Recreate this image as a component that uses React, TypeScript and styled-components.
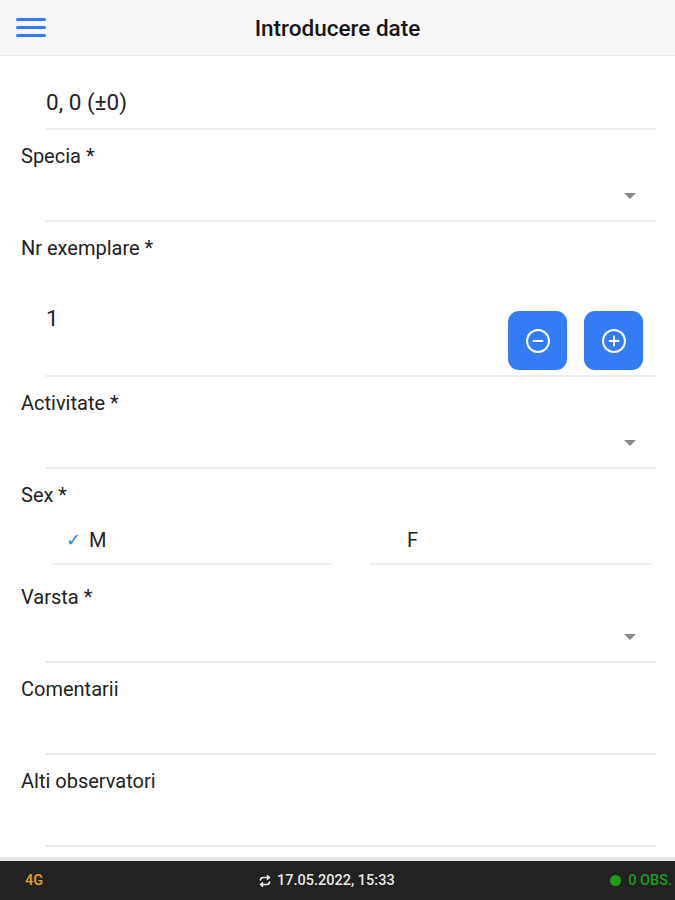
import React, { useState } from "react";
import styled, { createGlobalStyle } from "styled-components";

const GlobalStyle = createGlobalStyle`
  html, body {
    margin: 0;
    padding: 0;
    background: #ffffff;
  }
  body {
    font-family: Roboto, "Liberation Sans", Arial, sans-serif;
    color: #1c1c1c;
  }
  * {
    box-sizing: border-box;
  }
`;

const Screen = styled.div`
  width: 675px;
  height: 900px;
  display: flex;
  flex-direction: column;
  background: #ffffff;
  overflow: hidden;
`;

const Header = styled.div`
  height: 56px;
  flex-shrink: 0;
  background: #f7f7f7;
  border-bottom: 1px solid #e9e9e9;
  display: flex;
  align-items: center;
  position: relative;
`;

const MenuButton = styled.div`
  width: 30px;
  margin-left: 16px;
  display: flex;
  flex-direction: column;
  gap: 5px;
  span {
    display: block;
    height: 3px;
    border-radius: 2px;
    background: #2f7cf6;
  }
`;

const Title = styled.div`
  position: absolute;
  left: 0;
  right: 0;
  text-align: center;
  font-size: 22.5px;
  font-weight: 500;
  color: #151515;
  pointer-events: none;
`;

const Form = styled.div`
  flex: 1;
  padding-top: 19px;
`;

const Field = styled.div<{ $extra?: number }>`
  padding-top: 15px;
  margin-bottom: ${(p) => p.$extra || 0}px;
`;

const Label = styled.div`
  margin-left: 21px;
  font-size: 20px;
  line-height: 22px;
  color: #222;
`;

const InputRow = styled.div<{ $height?: number }>`
  margin-left: 46px;
  margin-right: 19px;
  height: ${(p) => p.$height || 55}px;
  border-bottom: 2px solid #ececec;
  display: flex;
  align-items: center;
  justify-content: space-between;
`;

const Value = styled.div`
  font-size: 22.5px;
  color: #222;
`;

const CountValue = styled(Value)`
  align-self: flex-start;
  margin-top: 46px;
`;

const Arrow = styled.div`
  width: 0;
  height: 0;
  margin-right: 20px;
  margin-top: 4px;
  border-left: 6px solid transparent;
  border-right: 6px solid transparent;
  border-top: 6px solid #8a8a8a;
`;

const Stepper = styled.div`
  align-self: flex-end;
  margin-bottom: 5px;
  margin-right: 13px;
  display: flex;
  gap: 17px;
`;

const StepButton = styled.button`
  width: 59px;
  height: 59px;
  border: none;
  border-radius: 11px;
  background: #347bf6;
  display: flex;
  align-items: center;
  justify-content: center;
  padding: 0;
  cursor: pointer;
`;

const Options = styled.div`
  display: flex;
  gap: 37px;
  padding-left: 52px;
  padding-right: 24px;
`;

const Option = styled.div`
  flex: 1;
  height: 59px;
  padding-top: 10px;
  border-bottom: 2px solid #f0f0f0;
  display: flex;
  align-items: center;
  padding-left: 14px;
  gap: 8px;
  font-size: 20px;
  color: #222;
  cursor: pointer;
`;

const Check = styled.span<{ $on: boolean }>`
  width: 15px;
  color: #2f7cf6;
  font-size: 18px;
  visibility: ${(p) => (p.$on ? "visible" : "hidden")};
`;

const StatusBar = styled.div`
  height: 43px;
  flex-shrink: 0;
  background: #222222;
  border-top: 4px solid #e6e6e6;
  display: flex;
  align-items: center;
  padding: 0 3px 0 25px;
  font-size: 14.5px;
  font-weight: 500;
`;

const Network = styled.div`
  color: #e3a125;
  flex: 0 0 233px;
`;

const Sync = styled.div`
  color: #e8e8e8;
  display: flex;
  align-items: center;
  gap: 5px;
`;

const Obs = styled.div`
  color: #1f9a1f;
  display: flex;
  align-items: center;
  gap: 7px;
  margin-left: auto;
`;

const Dot = styled.span`
  width: 11px;
  height: 11px;
  border-radius: 50%;
  background: #1f9a1f;
`;

const CircleIcon = ({ plus }: { plus?: boolean }) => (
  <svg width="26" height="26" viewBox="0 0 26 26" fill="none" stroke="#fff" strokeWidth="2" strokeLinecap="round">
    <circle cx="13" cy="13" r="11" />
    <line x1="8.5" y1="13" x2="17.5" y2="13" />
    {plus && <line x1="13" y1="8.5" x2="13" y2="17.5" />}
  </svg>
);

const SyncIcon = () => (
  <svg width="14" height="12" viewBox="0 0 13 12" fill="none" stroke="#e8e8e8" strokeWidth="1.6" strokeLinecap="round" strokeLinejoin="round">
    <path d="M2 5 C2 3 3.5 2.5 5 2.5 H11 M9 0.8 L11 2.5 L9 4.2" />
    <path d="M11 7 C11 9 9.5 9.5 8 9.5 H2 M4 7.8 L2 9.5 L4 11.2" />
  </svg>
);

const SelectField = ({ label }: { label: string }) => (
  <Field>
    <Label>{label}</Label>
    <InputRow>
      <span />
      <Arrow />
    </InputRow>
  </Field>
);

const App = () => {
  const [count, setCount] = useState(1);
  const [sex, setSex] = useState("M");

  return (
    <Screen>
      <GlobalStyle />
      <Header>
        <MenuButton>
          <span />
          <span />
          <span />
        </MenuButton>
        <Title>Introducere date</Title>
      </Header>

      <Form>
        <InputRow>
          <Value>0, 0 (±0)</Value>
        </InputRow>

        <SelectField label="Specia *" />

        <Field>
          <Label>Nr exemplare *</Label>
          <InputRow $height={118}>
            <CountValue>{count}</CountValue>
            <Stepper>
              <StepButton onClick={() => setCount(Math.max(0, count - 1))}>
                <CircleIcon />
              </StepButton>
              <StepButton onClick={() => setCount(count + 1)}>
                <CircleIcon plus />
              </StepButton>
            </Stepper>
          </InputRow>
        </Field>

        <SelectField label="Activitate *" />

        <Field $extra={6}>
          <Label>Sex *</Label>
          <Options>
            {["M", "F"].map((s) => (
              <Option key={s} onClick={() => setSex(s)}>
                <Check $on={sex === s}>✓</Check>
                {s}
              </Option>
            ))}
          </Options>
        </Field>

        <SelectField label="Varsta *" />

        <Field>
          <Label>Comentarii</Label>
          <InputRow />
        </Field>

        <Field>
          <Label>Alti observatori</Label>
          <InputRow />
        </Field>
      </Form>

      <StatusBar>
        <Network>4G</Network>
        <Sync>
          <SyncIcon />
          17.05.2022, 15:33
        </Sync>
        <Obs>
          <Dot />
          0 OBS.
        </Obs>
      </StatusBar>
    </Screen>
  );
};

export default App;
